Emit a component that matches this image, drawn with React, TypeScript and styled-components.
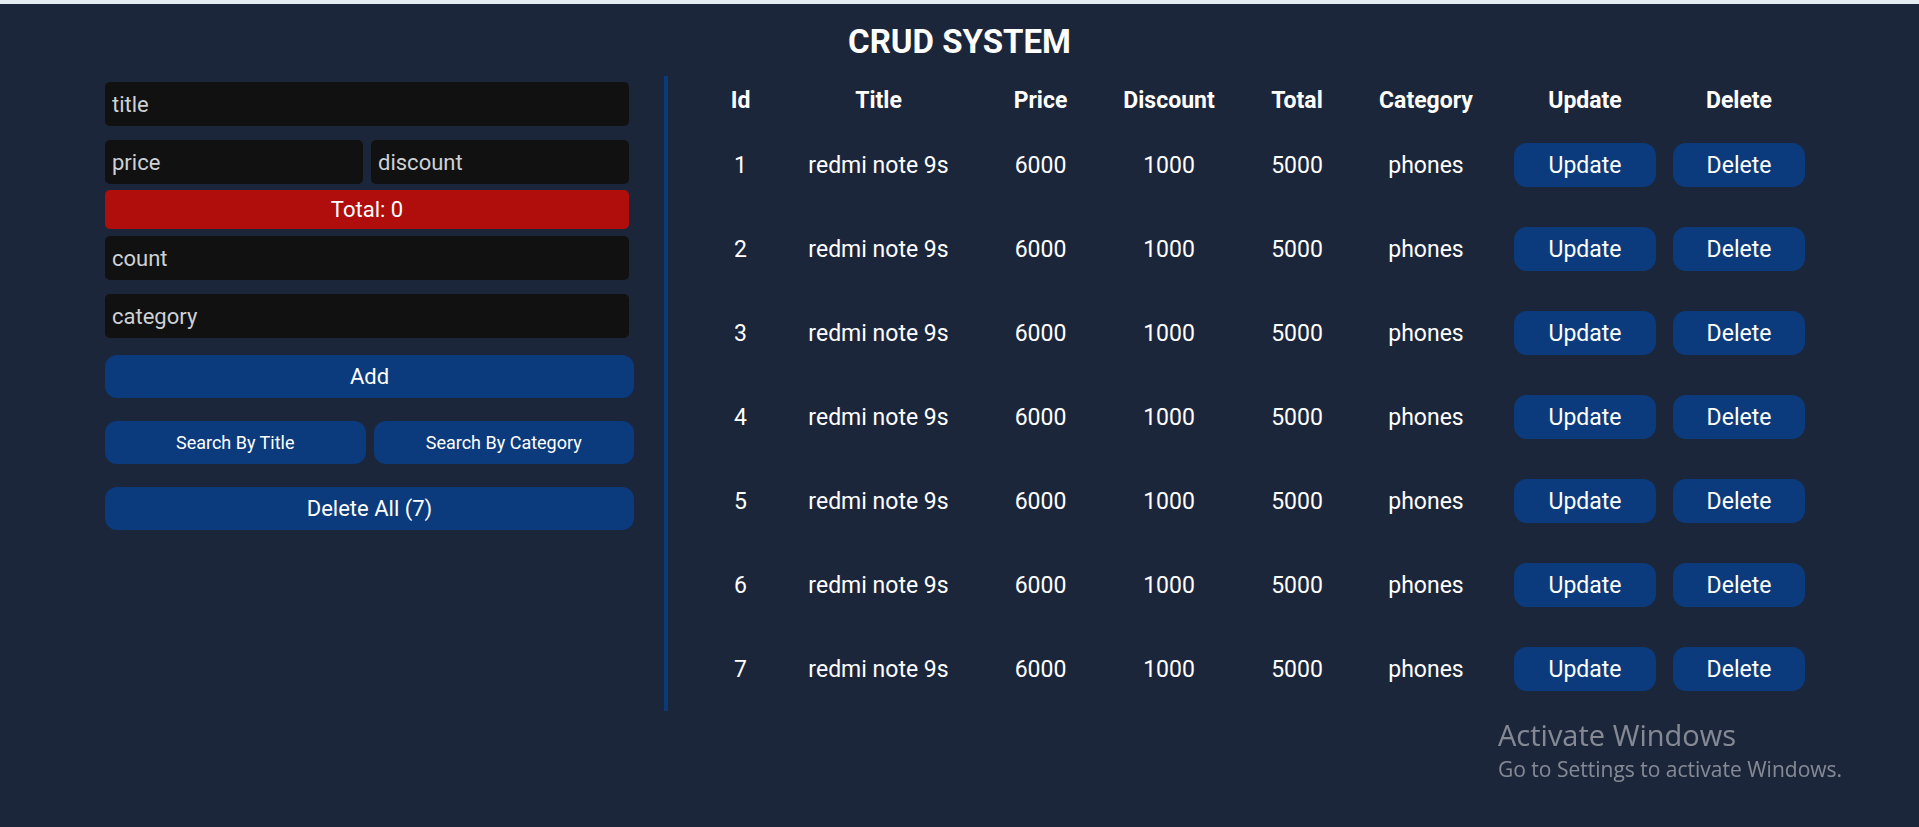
import styled, { createGlobalStyle } from "styled-components";

const BG = "#1c263a";
const BLUE = "#0b3b7c";
const RED = "#b00d0d";
const FIELD = "#111111";

const GlobalStyle = createGlobalStyle`
    * {
        box-sizing: border-box;
    }
    body {
        margin: 0;
        background-color: ${BG};
        color: #ffffff;
        font-family: Roboto, "Liberation Sans", sans-serif;
    }
`;

const TopStrip = styled.div`
    height: 4px;
    background-color: #e6edf2;
`;

const Heading = styled.h1`
    margin: 18px 0 14px;
    text-align: center;
    font-size: 33px;
    line-height: 40px;
    font-weight: 700;
`;

const Main = styled.main`
    margin-left: 105px;
    display: flex;
    align-items: flex-start;
    gap: 30px;
`;

const Form = styled.section`
    width: 529px;
    margin-top: 6px;
    display: flex;
    flex-direction: column;
`;

const Inputs = styled.div`
    width: 524px;
    display: flex;
    flex-direction: column;
`;

const Row = styled.div<{ $mt: number }>`
    display: flex;
    gap: 8px;
    margin-top: ${({ $mt }) => `${$mt}px`};
`;

const Field = styled.input<{ $mt?: number }>`
    width: 100%;
    min-width: 0;
    height: 44px;
    margin: ${({ $mt }) => `${$mt ?? 0}px`} 0 0;
    padding: 0 7px;
    border: none;
    outline: none;
    border-radius: 5px;
    background-color: ${FIELD};
    color: #ffffff;
    font-family: Roboto, "Liberation Sans", sans-serif;
    font-size: 22px;

    &::placeholder {
        color: #cdd1d6;
    }
`;

const TotalBox = styled.div`
    height: 39px;
    margin-top: 6px;
    display: flex;
    align-items: center;
    justify-content: center;
    border-radius: 5px;
    background-color: ${RED};
    font-size: 22px;
`;

const WideButton = styled.button<{ $mt?: number; $size?: number }>`
    width: 100%;
    height: 43px;
    margin-top: ${({ $mt }) => `${$mt ?? 0}px`};
    border: none;
    border-radius: 12px;
    background-color: ${BLUE};
    color: #ffffff;
    font-family: Roboto, "Liberation Sans", sans-serif;
    font-size: ${({ $size }) => `${$size ?? 22}px`};
    cursor: pointer;
`;

const TablePanel = styled.section`
    padding-left: 40px;
    border-left: 4px solid #0b3a7a;
`;

const Table = styled.table`
    width: 1099px;
    table-layout: fixed;
    border-collapse: collapse;
    text-align: center;
    font-size: 23px;
`;

const Th = styled.th<{ $w: number }>`
    width: ${({ $w }) => `${$w}px`};
    height: 47px;
    padding: 2px 0 0;
    font-weight: 700;
`;

const Td = styled.td`
    height: 84px;
    padding: 0;
    vertical-align: middle;
    white-space: nowrap;
`;

const RowButton = styled.button`
    height: 44px;
    padding: 0 34px;
    border: none;
    border-radius: 13px;
    background-color: ${BLUE};
    color: #ffffff;
    font-family: Roboto, "Liberation Sans", sans-serif;
    font-size: 23px;
    cursor: pointer;
`;

const Watermark = styled.div`
    position: fixed;
    left: 1498px;
    top: 715px;
    font-family: "Open Sans", "Noto Sans", sans-serif;
    color: rgba(255, 255, 255, 0.46);
    pointer-events: none;
`;

const WatermarkTitle = styled.div`
    font-size: 29px;
`;

const WatermarkText = styled.div`
    margin-top: 1px;
    font-size: 21px;
`;

const columns = [
    { label: "Id", w: 65 },
    { label: "Title", w: 211 },
    { label: "Price", w: 113 },
    { label: "Discount", w: 144 },
    { label: "Total", w: 112 },
    { label: "Category", w: 146 },
    { label: "Update", w: 172 },
    { label: "Delete", w: 136 },
];

type Product = {
    title: string;
    price: number;
    discount: number;
    category: string;
};

const products: Product[] = Array.from({ length: 7 }, () => ({
    title: "redmi note 9s",
    price: 6000,
    discount: 1000,
    category: "phones",
}));

function App() {
    return (
        <>
            <GlobalStyle />
            <TopStrip />
            <Heading>CRUD SYSTEM</Heading>
            <Main>
                <Form>
                    <Inputs>
                        <Field placeholder="title" />
                        <Row $mt={14}>
                            <Field placeholder="price" />
                            <Field placeholder="discount" />
                        </Row>
                        <TotalBox>Total: 0</TotalBox>
                        <Field $mt={7} placeholder="count" />
                        <Field $mt={14} placeholder="category" />
                    </Inputs>
                    <WideButton $mt={17}>Add</WideButton>
                    <Row $mt={23}>
                        <WideButton $size={18}>Search By Title</WideButton>
                        <WideButton $size={18}>Search By Category</WideButton>
                    </Row>
                    <WideButton $mt={23}>Delete All ({products.length})</WideButton>
                </Form>
                <TablePanel>
                    <Table>
                        <thead>
                            <tr>
                                {columns.map((col) => (
                                    <Th key={col.label} $w={col.w}>
                                        {col.label}
                                    </Th>
                                ))}
                            </tr>
                        </thead>
                        <tbody>
                            {products.map((p, idx) => (
                                <tr key={idx}>
                                    <Td>{idx + 1}</Td>
                                    <Td>{p.title}</Td>
                                    <Td>{p.price}</Td>
                                    <Td>{p.discount}</Td>
                                    <Td>{p.price - p.discount}</Td>
                                    <Td>{p.category}</Td>
                                    <Td>
                                        <RowButton>Update</RowButton>
                                    </Td>
                                    <Td>
                                        <RowButton>Delete</RowButton>
                                    </Td>
                                </tr>
                            ))}
                        </tbody>
                    </Table>
                </TablePanel>
            </Main>
            <Watermark>
                <WatermarkTitle>Activate Windows</WatermarkTitle>
                <WatermarkText>Go to Settings to activate Windows.</WatermarkText>
            </Watermark>
        </>
    );
}

export default App;
